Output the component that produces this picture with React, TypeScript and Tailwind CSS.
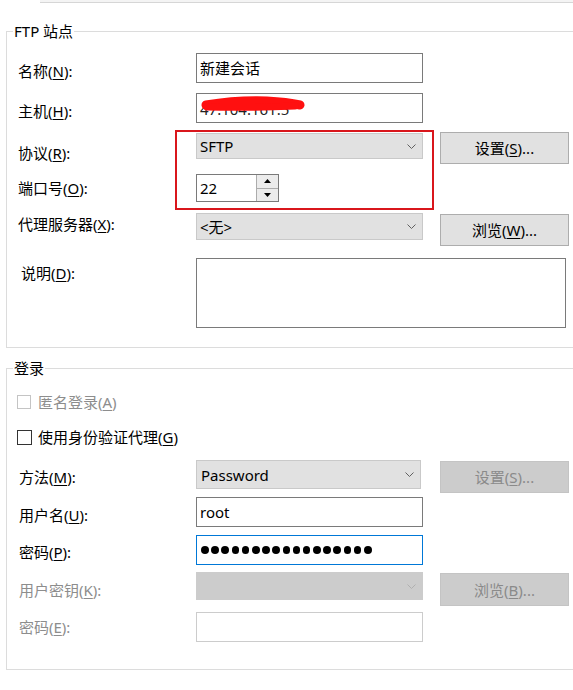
import React from "react";

const U = ({ c }: { c: string }) => <span className="underline underline-offset-[2px]">{c}</span>;

const Chevron = ({ color = "#606060" }: { color?: string }) => (
  <svg width="9" height="5" viewBox="0 0 9 5" className="shrink-0">
    <polyline points="0.5,0.5 4.5,4.5 8.5,0.5" fill="none" stroke={color} strokeWidth="1" />
  </svg>
);

const Label = ({ children, pt, cls = "" }: { children: React.ReactNode; pt: string; cls?: string }) => (
  <div className={`w-[189px] shrink-0 pl-[11px] leading-[20px] ${pt} ${cls}`}>{children}</div>
);

const Button = ({
  children,
  h,
  disabled = false,
  mt = "",
  ml = "ml-[17px]",
}: {
  children: React.ReactNode;
  h: string;
  disabled?: boolean;
  mt?: string;
  ml?: string;
}) => (
  <div
    className={`${ml} w-[129px] ${h} ${mt} flex items-center justify-center border leading-[20px] ${
      disabled ? "bg-[#cccccc] border-[#c4c4c4] text-[#8a8a8a]" : "bg-[#e1e1e1] border-[#adadad] text-black"
    }`}
  >
    {children}
  </div>
);

export default function App() {
  return (
    <div className="w-[573px] h-[690px] overflow-hidden bg-white text-[15px] text-black font-['Noto_Sans','Noto_Sans_CJK_SC',sans-serif]">
      <div className="ml-[40px] h-[3px] border-b border-[#d6d6d6] bg-[#f4f4f4]" />

      {/* FTP 站点 */}
      <fieldset className="ml-[6px] mt-[18px] w-[600px] border border-[#dcdcdc] p-0 pb-[19px]">
        <legend className="ml-[6px] px-[1px] h-[20px] leading-[20px]">FTP 站点</legend>

        <div className="flex items-start mt-[12px] h-[30px]">
          <Label pt="pt-[8px]">
            名称(<U c="N" />):
          </Label>
          <div className="w-[227px] h-[30px] border border-[#7a7a7a] flex items-center pl-[3px] leading-[20px]">新建会话</div>
        </div>

        <div className="flex items-start mt-[10px] h-[30px]">
          <Label pt="pt-[8px]">
            主机(<U c="H" />):
          </Label>
          <div className="relative w-[227px] h-[30px] border border-[#7a7a7a] flex items-center pl-[3px] leading-[20px] overflow-hidden">
            <span className="text-[#222] pt-[2px]">47.104.161.5</span>
            <svg className="absolute left-0 top-0" width="227" height="30" viewBox="0 0 227 30">
              <path d="M9 11 Q40 6 70 7 Q90 8 103 11" fill="none" stroke="#ff1010" strokeWidth="9" strokeLinecap="round" />
              <path d="M10 13 Q50 14 98 12" fill="none" stroke="#ff1010" strokeWidth="7" strokeLinecap="round" />
            </svg>
          </div>
        </div>

        {/* highlighted area */}
        <div className="relative">
          <div className="absolute left-[168px] top-[-3px] w-[259px] h-[80px] border-2 border-[#d9161c] pointer-events-none" />

          <div className="flex items-start mt-[10px] h-[32px]">
            <Label pt="pt-[10px]">
              协议(<U c="R" />):
            </Label>
            <div className="w-[227px] h-[26px] border border-[#c9c9c9] bg-[#e1e1e1] flex items-center justify-between pl-[3px] pr-[6px] leading-[20px]">
              <span>SFTP</span>
              <Chevron />
            </div>
            <Button h="h-[32px]" mt="-mt-[1px]">
              设置(<U c="S" />)...
            </Button>
          </div>

          <div className="flex items-start mt-[9px] h-[28px]">
            <Label pt="pt-[4px]">
              端口号(<U c="O" />):
            </Label>
            <div className="w-[83px] h-[28px] border border-[#7a7a7a] flex">
              <div className="flex-1 flex items-center pl-[3px] leading-[20px]">22</div>
              <div className="w-[22px] flex flex-col border-l border-[#acacac]">
                <div className="flex-1 flex items-center justify-center bg-[#ececec] border-b border-[#acacac]">
                  <svg width="7" height="4" viewBox="0 0 7 4">
                    <polygon points="0,4 3.5,0 7,4" fill="#000" />
                  </svg>
                </div>
                <div className="flex-1 flex items-center justify-center bg-[#ececec]">
                  <svg width="7" height="4" viewBox="0 0 7 4">
                    <polygon points="0,0 3.5,4 7,0" fill="#000" />
                  </svg>
                </div>
              </div>
            </div>
          </div>
        </div>

        <div className="flex items-start mt-[11px] h-[32px]">
          <Label pt="pt-[1px]">
            代理服务器(<U c="X" />):
          </Label>
          <div className="w-[227px] h-[27px] border border-[#c9c9c9] bg-[#e1e1e1] flex items-center justify-between pl-[3px] pr-[6px] leading-[20px]">
            <span>&lt;无&gt;</span>
            <Chevron />
          </div>
          <Button h="h-[32px]" mt="mt-[1px]">
            浏览(<U c="W" />)...
          </Button>
        </div>

        <div className="flex items-start mt-[13px] h-[70px]">
          <Label pt="pt-[5px]" cls="pl-[14px]">
            说明(<U c="D" />):
          </Label>
          <div className="w-[370px] h-[70px] border border-[#7a7a7a]" />
        </div>
      </fieldset>

      {/* 登录 */}
      <fieldset className="ml-[6px] mt-[10px] w-[600px] border border-[#dcdcdc] p-0 pb-[27px]">
        <legend className="ml-[6px] px-[1px] h-[20px] leading-[20px]">登录</legend>

        <div className="flex items-center mt-[14px] h-[20px] ml-[10px] text-[#8d8d8d]">
          <div className="w-[14px] h-[14px] border border-[#c4c4c4]" />
          <span className="ml-[7px] leading-[20px]">
            匿名登录(<U c="A" />)
          </span>
        </div>

        <div className="flex items-center mt-[15px] h-[20px] ml-[10px]">
          <div className="w-[15px] h-[15px] border border-[#333333]" />
          <span className="ml-[6px] leading-[20px]">
            使用身份验证代理(<U c="G" />)
          </span>
        </div>

        <div className="flex items-start mt-[13px] h-[33px]">
          <Label pt="pt-[7px]" cls="pl-[12px]">
            方法(<U c="M" />):
          </Label>
          <div className="w-[225px] h-[29px] border border-[#c9c9c9] bg-[#e1e1e1] flex items-center justify-between pl-[4px] pr-[6px] leading-[20px]">
            <span>Password</span>
            <Chevron />
          </div>
          <Button h="h-[32px]" disabled mt="mt-[1px]" ml="ml-[19px]">
            设置(<U c="S" />)...
          </Button>
        </div>

        <div className="flex items-start mt-[4px] h-[30px]">
          <Label pt="pt-[8px]" cls="pl-[12px]">
            用户名(<U c="U" />):
          </Label>
          <div className="w-[227px] h-[30px] border border-[#7a7a7a] flex items-center pl-[3px] leading-[20px]">root</div>
        </div>

        <div className="flex items-start mt-[8px] h-[30px]">
          <Label pt="pt-[7px]" cls="pl-[12px]">
            密码(<U c="P" />):
          </Label>
          <div className="w-[227px] h-[30px] border border-[#0078d7] flex items-center pl-[4px] gap-[2.6px]">
            {Array.from({ length: 17 }).map((_, i) => (
              <div key={i} className="w-[7.6px] h-[7.6px] rounded-full bg-black" />
            ))}
          </div>
        </div>

        <div className="flex items-start mt-[7px] h-[34px]">
          <Label pt="pt-[8px]" cls="pl-[12px] text-[#8d8d8d]">
            用户密钥(<U c="K" />):
          </Label>
          <div className="w-[227px] h-[28px] border border-[#cccccc] bg-[#cccccc] flex items-center justify-end pr-[6px]">
            <Chevron color="#b0b0b0" />
          </div>
          <Button h="h-[33px]" disabled mt="mt-[1px]">
            浏览(<U c="B" />)...
          </Button>
        </div>

        <div className="flex items-start mt-[6px] h-[30px]">
          <Label pt="pt-[5px]" cls="pl-[12px] text-[#8d8d8d]">
            密码(<U c="E" />):
          </Label>
          <div className="w-[227px] h-[30px] border border-[#cccccc]" />
        </div>
      </fieldset>
    </div>
  );
}
